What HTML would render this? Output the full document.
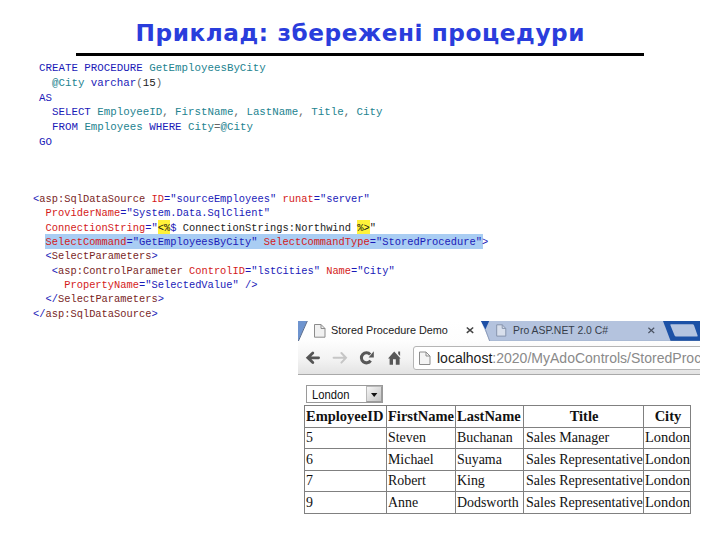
<!DOCTYPE html>
<html lang="uk">
<head>
<meta charset="utf-8">
<title>Приклад: збережені процедури</title>
<style>
html,body{margin:0;padding:0;}
body{width:720px;height:540px;position:relative;background:#fff;overflow:hidden;font-family:"Liberation Sans",sans-serif;}
.abs{position:absolute;}
#title{left:0.3px;top:18px;width:720px;text-align:center;font-family:"DejaVu Sans","Liberation Sans",sans-serif;font-weight:bold;font-size:23.2px;letter-spacing:0.58px;line-height:30px;color:#2a3ddc;white-space:nowrap;}
#rule{left:76px;top:53px;width:568px;height:3px;background:#000;}
pre{margin:0;font-family:"Liberation Mono",monospace;white-space:pre;}
#sql{left:39px;top:61.0px;font-size:10.8px;line-height:14.8px;color:#222;}
#sql .k{color:#1a1ab8;}
#sql .t{color:#23838f;}
#sql .g{color:#666;}
#asp{left:33px;top:192px;font-size:10.4px;line-height:14.34px;color:#222;}
#asp .a{color:#d41a1a;}
#asp .v{color:#1a1ab8;}
#asp .e{color:#7a1f1f;}
#asp .y{background:#fff23a;padding-top:1.6px;color:#111;}
#hl{left:45px;top:233.8px;width:438px;height:15.3px;background:#a9cdf3;}

/* browser screenshot */
#br{left:298px;top:321px;width:402px;height:200px;overflow:hidden;}
#br .abs{position:absolute;}
#tabstrip{left:0;top:0;width:402px;height:21px;background:#1d51a8;}
#tabL{left:0;top:0;width:10px;height:21px;background:#6e94cf;}
#tab1{left:0;top:0;width:192px;height:21px;}
#tab2{left:184px;top:0;width:190px;height:21px;}
.tabtxt{font-family:"Liberation Sans",sans-serif;font-size:11.2px;line-height:14px;color:#1a1a1a;white-space:nowrap;transform-origin:0 50%;}
#toolbar{left:0;top:20px;width:402px;height:33px;background:linear-gradient(#fdfdfd,#f3f3f3 55%,#e3e3e3);border-bottom:1px solid #a9a9a9;}
#addr{left:115px;top:25px;width:300px;height:22px;background:#fff;border:1px solid #b5b5b5;border-radius:3px;}
#url{left:139px;top:28px;font-family:"Liberation Sans",sans-serif;font-size:14.2px;line-height:18px;color:#8a8a8a;white-space:nowrap;transform-origin:0 50%;transform:scaleX(0.988);}
#url b{font-weight:normal;color:#1a1a1a;}
#sel{left:8px;top:64px;width:75px;height:16px;border:1px solid #9a9a9a;background:#fff;}
#selbtn{left:59.4px;top:0;width:15.6px;height:16px;border:1px solid #b9b9b9;border-right-color:#9c9c9c;border-bottom-color:#9c9c9c;background:linear-gradient(135deg,#f6f6f6,#dcdcdc 50%,#c4c4c4);box-sizing:border-box;}
#seltxt{left:4.6px;top:0.5px;font-family:"Liberation Sans",sans-serif;font-size:12.9px;line-height:16px;color:#111;transform:scaleX(0.87);transform-origin:0 50%;}
#grid{left:6px;top:84px;width:386px;border-collapse:collapse;table-layout:fixed;font-family:"Liberation Serif",serif;font-size:15.2px;line-height:17px;color:#111;}
#grid td,#grid th{border:1px solid #808080;padding:0 0 0 2px;white-space:nowrap;overflow:visible;text-align:left;vertical-align:middle;}
#grid th{font-weight:bold;}
#grid th.c{text-align:center;padding:0;}
#grid span{display:inline-block;position:relative;top:-1.3px;left:-1.0px;transform:scaleX(0.916);transform-origin:0 50%;}
#grid th span{top:-1px;left:-0.6px;transform:scaleX(0.955);}
#grid th.c span{transform-origin:50% 50%;left:0.5px;}
#grid span.w{transform:scaleX(0.95);left:-1.2px;}
#grid span.s{transform:scaleX(0.926);left:-0.4px;}
</style>
</head>
<body>
<div id="title" class="abs">Приклад: збережені процедури</div>
<div id="rule" class="abs"></div>
<pre id="sql" class="abs"><span class="k">CREATE PROCEDURE</span> <span class="t">GetEmployeesByCity</span>
  <span class="t">@City</span> <span class="k">varchar</span><span class="g">(</span>15<span class="g">)</span>
<span class="k">AS</span>
  <span class="k">SELECT</span> <span class="t">EmployeeID</span><span class="g">,</span> <span class="t">FirstName</span><span class="g">,</span> <span class="t">LastName</span><span class="g">,</span> <span class="t">Title</span><span class="g">,</span> <span class="t">City</span>
  <span class="k">FROM</span> <span class="t">Employees</span> <span class="k">WHERE</span> <span class="t">City</span><span class="g">=</span><span class="t">@City</span>
<span class="k">GO</span></pre>
<div id="hl" class="abs"></div>
<pre id="asp" class="abs"><span class="v">&lt;</span><span class="e">asp:SqlDataSource</span> <span class="a">ID</span><span class="v">="sourceEmployees"</span> <span class="a">runat</span><span class="v">="server"</span>
  <span class="a">ProviderName</span><span class="v">="System.Data.SqlClient"</span>
  <span class="a">ConnectionString</span><span class="v">="</span><span class="y">&lt;%</span><span class="v">$</span> ConnectionStrings:Northwind <span class="y">%&gt;</span>"
  <span class="a">SelectCommand</span><span class="v">="GetEmployeesByCity"</span> <span class="a">SelectCommandType</span><span class="v">="StoredProcedure"&gt;</span>
  <span class="v">&lt;</span><span class="e">SelectParameters</span><span class="v">&gt;</span>
   <span class="v">&lt;</span><span class="e">asp:ControlParameter</span> <span class="a">ControlID</span><span class="v">="lstCities"</span> <span class="a">Name</span><span class="v">="City"</span>
     <span class="a">PropertyName</span><span class="v">="SelectedValue" /&gt;</span>
  <span class="v">&lt;/</span><span class="e">SelectParameters</span><span class="v">&gt;</span>
<span class="v">&lt;/</span><span class="e">asp:SqlDataSource</span><span class="v">&gt;</span></pre>

<div id="br" class="abs">
  <div id="tabstrip" class="abs"></div>
  <svg class="abs" style="left:0;top:0" width="402" height="22" viewBox="0 0 402 22">
    <defs>
      <linearGradient id="gt" x1="0" y1="0" x2="0" y2="1"><stop offset="0" stop-color="#ffffff"/><stop offset="1" stop-color="#fdfdfd"/></linearGradient>
    </defs>
    <!-- frame -->
    <rect x="0" y="0" width="402" height="20.6" fill="#1c51a6"/>
    <polygon points="0,0 12,0 12,21 0,21" fill="#6e94cf"/>
    <!-- inactive tab -->
    <polygon points="180,0 365,0 372.8,20.5 188,20.5" fill="#b4c3de"/>
    <polygon points="182.8,0 191.2,0 187.4,8.4" fill="#1d4fa6"/>
    <!-- active tab -->
    <polygon points="9,0 182.8,0 191.8,20.5 402,20.5 402,22 0,22 0,20.5" fill="url(#gt)"/>
    <line x1="9.3" y1="0" x2="0.2" y2="20.5" stroke="#54688a" stroke-width="1"/>
    <line x1="187.4" y1="8.4" x2="191.8" y2="20.5" stroke="#8c9cba" stroke-width="1"/>
    <line x1="191.8" y1="20.200" x2="402" y2="20.200" stroke="#8f9db8" stroke-width="0.8"/>
    <!-- new tab button -->
    <path d="M373,3.3 H394.6 Q395.6,3.3 396,4.3 L399.6,14.6 Q400,15.6 399,15.6 H378 Q377,15.6 376.6,14.6 L372.4,4.3 Q372,3.3 373,3.3 Z" fill="#b4c4e0"/>
    <!-- page icons -->
    <path d="M16.500,3.500 h6.500 l4,4 v8.700 h-10.500 z" fill="#f1f1f1" stroke="#8c8c8c"/>
    <path d="M23,3.500 v4 h4" fill="none" stroke="#8c8c8c"/>
    <path d="M198.700,3.800 h5.500 l3.600,3.600 v7.700 h-9.100 z" fill="#d8dfec" stroke="#8794ad"/>
    <path d="M204.200,3.800 v3.600 h3.600" fill="none" stroke="#8794ad"/>
    <!-- close buttons -->
    <path d="M168.800,6.500 l6.400,5.400 m0,-5.400 l-6.400,5.400" stroke="#444" stroke-width="1.5" fill="none"/>
    <path d="M350.400,6.800 l5.800,5.200 m0,-5.200 l-5.800,5.200" stroke="#4a5262" stroke-width="1.15" fill="none"/>
  </svg>
  <div class="abs tabtxt" style="left:32.5px;top:2px;transform:scaleX(0.969)">Stored Procedure Demo</div>
  <div class="abs tabtxt" style="left:214.5px;top:2px;color:#363d4a;transform:scaleX(0.93)">Pro ASP.NET 2.0 C#</div>
  <div id="toolbar" class="abs"></div>
  <div id="addr" class="abs"></div>
  <svg class="abs" style="left:0;top:21px" width="140" height="33" viewBox="0 0 140 33">
    <!-- back -->
    <path d="M20.6,15.8 H10 M14.8,11 L9.8,15.8 L14.8,20.6" fill="none" stroke="#555" stroke-width="2.8" stroke-linecap="round" stroke-linejoin="miter"/>
    <!-- forward -->
    <path d="M35.6,15.8 H47 M43.4,11 L48,15.8 L43.4,20.6" fill="none" stroke="#c6c6c6" stroke-width="2" stroke-linecap="round"/>
    <!-- reload -->
    <path d="M72.2,12.6 A5,5 0 1 0 72.6,18.6" fill="none" stroke="#585858" stroke-width="3"/>
    <polygon points="70.6,15.4 75.8,9.2 75.8,15.4" fill="#585858"/>
    <!-- home -->
    <path d="M96.2,9.6 L102.6,16.6 H101.6 V22.8 H97.8 V17.3 H95 V22.8 H91.6 V16.6 H90 Z M100.2,9.4 h1.9 v4.6 l-1.9,-2 z" fill="#585858"/>
    <!-- addr page icon -->
    <path d="M121.500,10 h6.500 l4,4 v8.500 h-10.500 z" fill="#f4f4f4" stroke="#8c8c8c"/>
    <path d="M128,10 v4 h4" fill="none" stroke="#8c8c8c"/>
  </svg>
  <div id="url" class="abs"><b>localhost</b>:2020/MyAdoControls/StoredProc</div>
  <div id="sel" class="abs">
    <div id="seltxt" class="abs">London</div>
    <div id="selbtn" class="abs"></div>
    <svg class="abs" style="left:64px;top:7px" width="7" height="5" viewBox="0 0 7 5"><polygon points="0,0 6.4,0 3.2,4" fill="#111"/></svg>
  </div>
  <table id="grid" class="abs" cellspacing="0">
    <colgroup><col style="width:82px"><col style="width:69px"><col style="width:68px"><col style="width:120px"><col style="width:47px"></colgroup>
    <tr style="height:22px"><th><span>EmployeeID</span></th><th><span>FirstName</span></th><th><span>LastName</span></th><th class="c"><span>Title</span></th><th class="c"><span>City</span></th></tr>
    <tr style="height:21px"><td><span>5</span></td><td><span>Steven</span></td><td><span>Buchanan</span></td><td><span class="s">Sales Manager</span></td><td><span class="w">London</span></td></tr>
    <tr style="height:22px"><td><span>6</span></td><td><span>Michael</span></td><td><span>Suyama</span></td><td><span class="s">Sales Representative</span></td><td><span class="w">London</span></td></tr>
    <tr style="height:21px"><td><span>7</span></td><td><span>Robert</span></td><td><span>King</span></td><td><span class="s">Sales Representative</span></td><td><span class="w">London</span></td></tr>
    <tr style="height:22px"><td><span>9</span></td><td><span>Anne</span></td><td><span>Dodsworth</span></td><td><span class="s">Sales Representative</span></td><td><span class="w">London</span></td></tr>
  </table>
</div>
</body>
</html>
